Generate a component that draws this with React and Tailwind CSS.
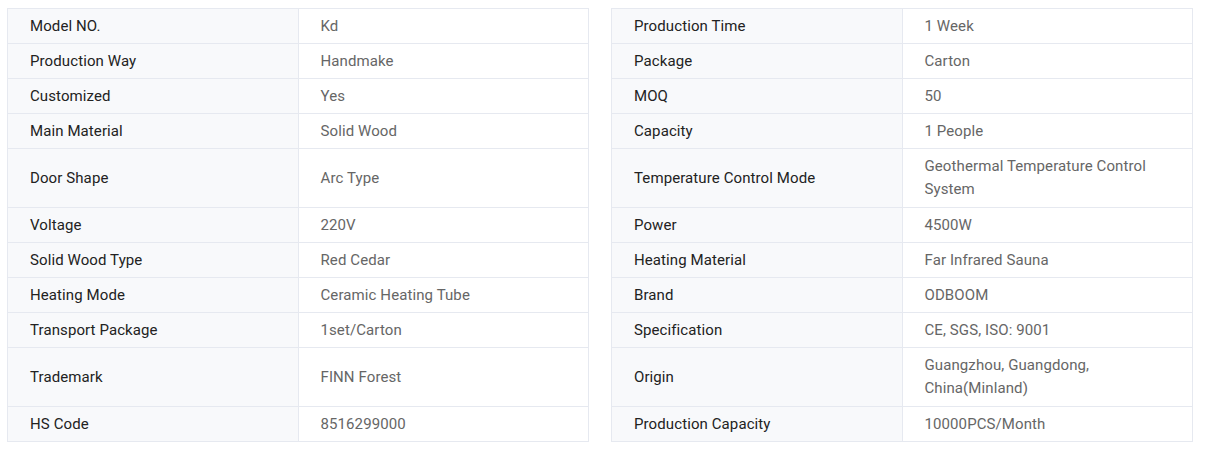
const left = [
  ["Model NO.", "Kd"],
  ["Production Way", "Handmake"],
  ["Customized", "Yes"],
  ["Main Material", "Solid Wood"],
  ["Door Shape", "Arc Type", true],
  ["Voltage", "220V"],
  ["Solid Wood Type", "Red Cedar"],
  ["Heating Mode", "Ceramic Heating Tube"],
  ["Transport Package", "1set/Carton"],
  ["Trademark", "FINN Forest", true],
  ["HS Code", "8516299000"],
];

const right = [
  ["Production Time", "1 Week"],
  ["Package", "Carton"],
  ["MOQ", "50"],
  ["Capacity", "1 People"],
  ["Temperature Control Mode", "Geothermal Temperature Control System", true],
  ["Power", "4500W"],
  ["Heating Material", "Far Infrared Sauna"],
  ["Brand", "ODBOOM"],
  ["Specification", "CE, SGS, ISO: 9001"],
  ["Origin", "Guangzhou, Guangdong, China(Minland)", true],
  ["Production Capacity", "10000PCS/Month"],
];

const SpecTable = ({ rows }) => (
  <table className="w-[582px] table-fixed border-collapse">
    <tbody>
      {rows.map(([label, value, tall]) => (
        <tr key={label} className={tall ? "h-[59px]" : "h-[35px]"}>
          <td className="w-1/2 border border-[#e6e9f0] bg-[#f8f9fb] pl-[22px] pr-[16px] py-[6px] leading-[22px] text-[15px] tracking-[0.1px] text-[#222]">
            {label}
          </td>
          <td className="w-1/2 border border-[#e6e9f0] bg-white pl-[22px] pr-[16px] py-[6px] leading-[23px] text-[15px] tracking-[0.1px] text-[#666]">
            {tall ? value : <span className="leading-[22px] block">{value}</span>}
          </td>
        </tr>
      ))}
    </tbody>
  </table>
);

export default function App() {
  return (
    <div className="w-[1208px] h-[452px] bg-white pt-[8px] pl-[7px] flex items-start gap-[22px] font-['Roboto',sans-serif]">
      <SpecTable rows={left} />
      <SpecTable rows={right} />
    </div>
  );
}
